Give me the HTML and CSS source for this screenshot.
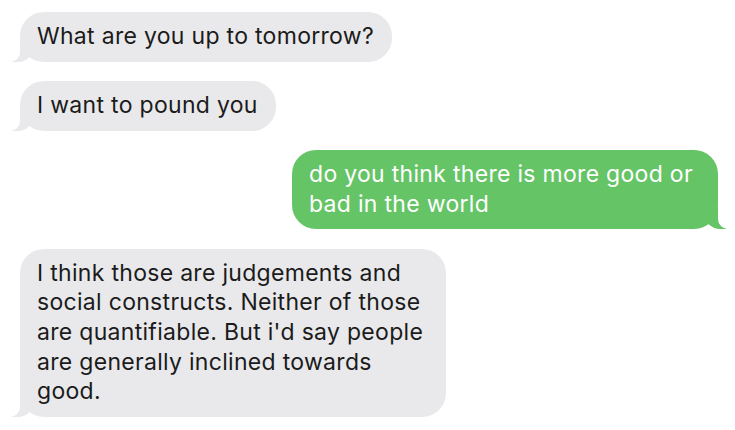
FILE: index.html
```html
<!DOCTYPE html>
<html lang="en">
<head>
  <meta charset="UTF-8" />
  <meta name="viewport" content="width=device-width, initial-scale=1.0" />
  <title>Messages</title>
  <link rel="stylesheet" href="styles.css">
</head>
<body>
  <main class="thread">
    <div class="bubble in">What are you up to tomorrow?</div>
    <div class="bubble in">I want to pound you</div>
    <div class="bubble out">do you think there is more good or bad in the world</div>
    <div class="bubble in">I think those are judgements and social constructs. Neither of those are quantifiable. But i'd say people are generally inclined towards good.</div>
  </main>
</body>
</html>
```

FILE: styles.css
```css
body {
  background: #fff;
  margin: 0;
  font-family: Inter, "Liberation Sans", sans-serif;
}
.thread {
  display: flex;
  flex-direction: column;
  gap: 19.5px;
  padding: 12px 17px 12px 20px;
}
.bubble {
  position: relative;
  box-sizing: border-box;
  max-width: 426px;
  padding: 10px 18px 10px 17px;
  border-radius: 24px;
  font-size: 23px;
  letter-spacing: 0.3px;
  line-height: 29.6px;
}
/* incoming messages sit on the left in grey */
.bubble.in {
  align-self: flex-start;
  background: #e9e9eb;
  color: #1b1b1b;
}
/* outgoing messages sit on the right in green */
.bubble.out {
  align-self: flex-end;
  background: #65c466;
  color: #fff;
}
/* the little tail under each bubble */
.bubble::before,
.bubble::after {
  content: "";
  position: absolute;
  bottom: 0;
  height: 22px;
}
.bubble.in::before {
  left: -8px;
  width: 22px;
  background: #e9e9eb;
  border-bottom-right-radius: 16px;
}
.bubble.in::after {
  left: -10px;
  width: 10px;
  background: #fff;
  border-bottom-right-radius: 10px;
}
.bubble.out::before {
  right: -8px;
  width: 22px;
  background: #65c466;
  border-bottom-left-radius: 16px;
}
.bubble.out::after {
  right: -10px;
  width: 10px;
  background: #fff;
  border-bottom-left-radius: 10px;
}
```
